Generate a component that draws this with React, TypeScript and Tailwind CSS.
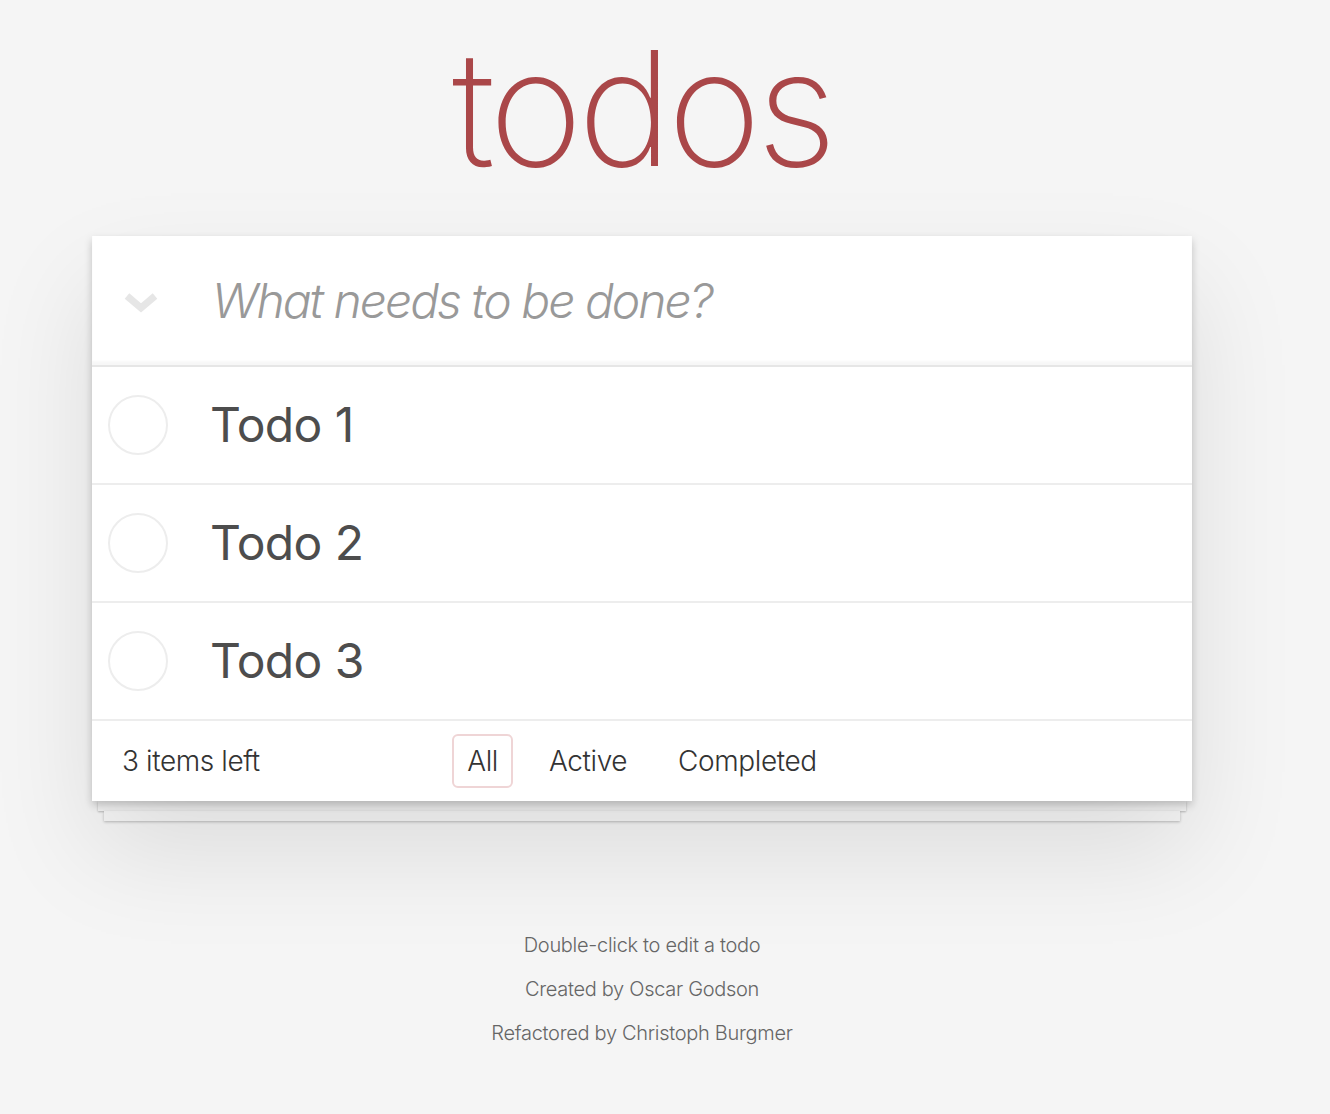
const todos = ["Todo 1", "Todo 2", "Todo 3"];

const Chevron = () => (
  <svg width="34" height="22" viewBox="0 0 34 22" className="block">
    <polyline
      points="3,4 17,16 31,4"
      fill="none"
      stroke="#e6e6e6"
      strokeWidth="7"
      strokeLinejoin="miter"
    />
  </svg>
);

const TodoRow = ({ label }: { label: string }) => (
  <li className="flex h-[118px] items-center border-b-2 border-[#ededed]">
    <div className="flex w-[120px] justify-start pl-[16px]">
      <span className="block h-[60px] w-[60px] rounded-full border-2 border-[#ededed]" />
    </div>
    <span className="-ml-[2px] text-[48px] leading-none tracking-[-0.6px] text-[#4d4d4d]">{label}</span>
  </li>
);

const App = () => {
  return (
    <div
      className="min-h-screen bg-[#f5f5f5] pb-[40px]"
      style={{ fontFamily: "Inter, 'Liberation Sans', sans-serif" }}
    >
      <div className="w-[1284px]">
        <h1 className="pt-[28px] text-center text-[160px] font-extralight leading-none tracking-[-5px] text-[#aa4749]">
          todos
        </h1>

        <section className="mx-auto mt-[48px] w-[1100px]">
          <div className="relative bg-white shadow-[0_4px_8px_rgba(0,0,0,0.2),0_50px_100px_rgba(0,0,0,0.1)]">
            <header className="flex h-[129px] items-center shadow-[inset_0_-4px_2px_rgba(0,0,0,0.03)]">
              <div className="flex w-[120px] justify-start pl-[32px] pt-[4px]">
                <Chevron />
              </div>
              <input
                className="h-full flex-1 bg-transparent pr-[32px] text-[48px] font-light italic tracking-[-2px] text-[#4d4d4d] outline-none placeholder:text-[#999]"
                placeholder="What needs to be done?"
              />
            </header>

            <ul className="border-t-2 border-[#e6e6e6]">
              {todos.map((t) => (
                <TodoRow key={t} label={t} />
              ))}
            </ul>

            <footer className="grid h-[80px] grid-cols-[1fr_auto_1fr] items-center px-[30px] text-[28px] font-light tracking-[-0.4px] text-[#333]">
              <span>3 items left</span>
              <ul className="flex items-center gap-[21px]">
                <li className="rounded-[6px] border-2 border-[#efd5d6] px-[13px] py-[4px]">All</li>
                <li className="rounded-[6px] border-2 border-transparent px-[13px] py-[4px]">Active</li>
                <li className="rounded-[6px] border-2 border-transparent px-[13px] py-[4px]">Completed</li>
              </ul>
              <span />
            </footer>
          </div>
          <div className="mx-[6px] h-[10px] bg-[#f6f6f6] shadow-[0_1px_2px_rgba(0,0,0,0.25)]" />
          <div className="mx-[12px] h-[10px] bg-[#f6f6f6] shadow-[0_1px_3px_rgba(0,0,0,0.25)]" />
        </section>

        <footer className="mt-[102px] text-center text-[20px] font-light leading-[44px] tracking-[-0.3px] text-[#666]">
          <p>Double-click to edit a todo</p>
          <p>Created by Oscar Godson</p>
          <p>Refactored by Christoph Burgmer</p>
        </footer>
      </div>
    </div>
  );
};

export default App;
